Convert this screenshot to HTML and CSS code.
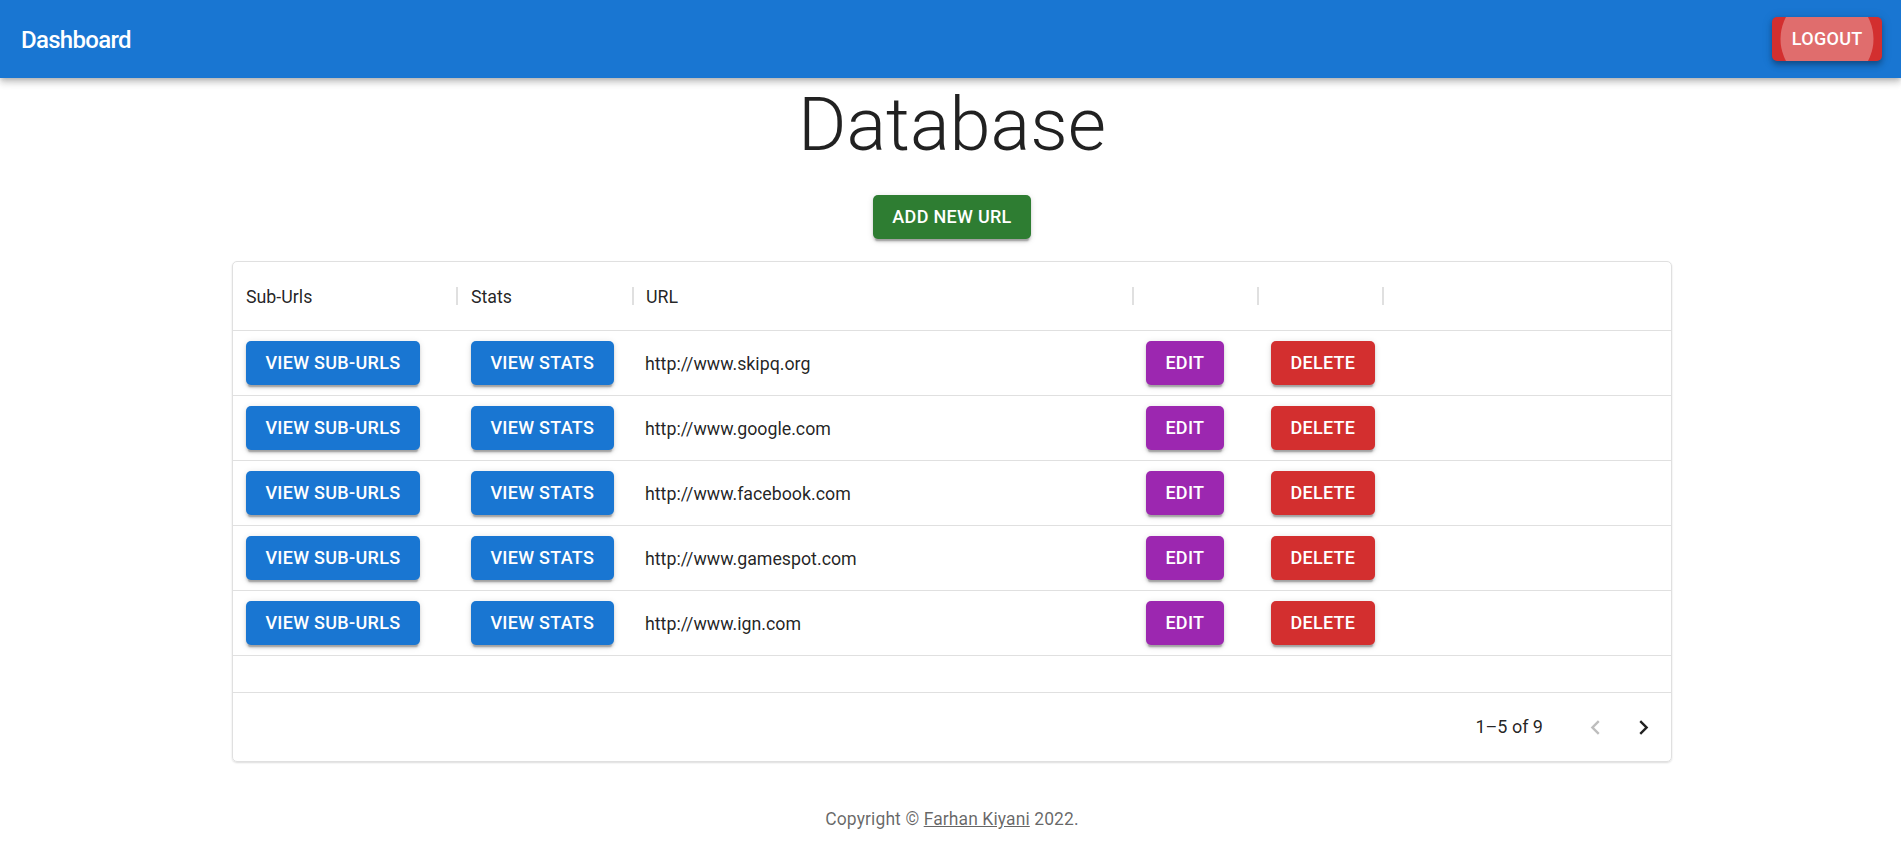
FILE: index.html
```html
<!DOCTYPE html>
<html lang="en">
<head>
<meta charset="utf-8">
<title>Dashboard</title>
<link rel="stylesheet" href="styles.css">
</head>
<body>
<header class="appbar">
  <div class="toolbar">
    <h6 class="brand">Dashboard</h6>
    <button class="btn btn-error btn-logout">Logout</button>
  </div>
</header>
<main class="main">
  <h2 class="title">Database</h2>
  <button class="btn btn-success btn-add">Add new URL</button>
  <div class="datagrid">
    <div class="grid-row grid-head">
      <div class="cell head-cell">Sub-Urls</div>
      <div class="cell head-cell">Stats</div>
      <div class="cell head-cell">URL</div>
      <div class="cell head-cell"></div>
      <div class="cell head-cell"></div>
      <div class="cell"></div>
    </div>
    <div class="grid-row">
      <div class="cell"><button class="btn btn-primary">View Sub-Urls</button></div>
      <div class="cell"><button class="btn btn-primary">View Stats</button></div>
      <div class="cell text-cell">http://www.skipq.org</div>
      <div class="cell"><button class="btn btn-secondary">Edit</button></div>
      <div class="cell"><button class="btn btn-error">Delete</button></div>
      <div class="cell"></div>
    </div>
    <div class="grid-row">
      <div class="cell"><button class="btn btn-primary">View Sub-Urls</button></div>
      <div class="cell"><button class="btn btn-primary">View Stats</button></div>
      <div class="cell text-cell">http://www.google.com</div>
      <div class="cell"><button class="btn btn-secondary">Edit</button></div>
      <div class="cell"><button class="btn btn-error">Delete</button></div>
      <div class="cell"></div>
    </div>
    <div class="grid-row">
      <div class="cell"><button class="btn btn-primary">View Sub-Urls</button></div>
      <div class="cell"><button class="btn btn-primary">View Stats</button></div>
      <div class="cell text-cell">http://www.facebook.com</div>
      <div class="cell"><button class="btn btn-secondary">Edit</button></div>
      <div class="cell"><button class="btn btn-error">Delete</button></div>
      <div class="cell"></div>
    </div>
    <div class="grid-row">
      <div class="cell"><button class="btn btn-primary">View Sub-Urls</button></div>
      <div class="cell"><button class="btn btn-primary">View Stats</button></div>
      <div class="cell text-cell">http://www.gamespot.com</div>
      <div class="cell"><button class="btn btn-secondary">Edit</button></div>
      <div class="cell"><button class="btn btn-error">Delete</button></div>
      <div class="cell"></div>
    </div>
    <div class="grid-row">
      <div class="cell"><button class="btn btn-primary">View Sub-Urls</button></div>
      <div class="cell"><button class="btn btn-primary">View Stats</button></div>
      <div class="cell text-cell">http://www.ign.com</div>
      <div class="cell"><button class="btn btn-secondary">Edit</button></div>
      <div class="cell"><button class="btn btn-error">Delete</button></div>
      <div class="cell"></div>
    </div>
    <div class="grid-filler"></div>
    <div class="grid-footer">
      <span class="page-info">1–5 of 9</span>
      <div class="page-actions">
        <button class="page-btn page-btn-disabled" aria-label="Previous page">
          <svg viewBox="0 0 24 24" width="29" height="29"><path d="M15.41 16.59 10.83 12l4.58-4.59L14 6l-6 6 6 6 1.41-1.41z" fill="currentColor"/></svg>
        </button>
        <button class="page-btn" aria-label="Next page">
          <svg viewBox="0 0 24 24" width="29" height="29"><path d="M8.59 16.59 13.17 12 8.59 7.41 10 6l6 6-6 6-1.41-1.41z" fill="currentColor"/></svg>
        </button>
      </div>
    </div>
  </div>
  <p class="copyright">Copyright © <a class="copyright-link" href="#">Farhan Kiyani</a> 2022.</p>
</main>
</body>
</html>
```
FILE: styles.css
```css
* { box-sizing: border-box; }

body {
  margin: 0;
  background: #fff;
  color: rgba(0, 0, 0, 0.87);
  font-family: Roboto, "Liberation Sans", Arial, sans-serif;
}

.appbar {
  position: relative;
  z-index: 1;
  background: #1976d2;
  color: #fff;
  box-shadow: 0 2.4px 4.8px -1.2px rgba(0,0,0,0.2), 0 4.8px 6px 0 rgba(0,0,0,0.14), 0 1.2px 12px 0 rgba(0,0,0,0.12);
}

.toolbar {
  height: 78px;
  display: flex;
  align-items: center;
  justify-content: space-between;
  padding: 0 19px 0 21px;
}

.brand {
  margin: 0;
  font-size: 24px;
  font-weight: 500;
  line-height: 1.6;
  letter-spacing: -0.7px;
  padding-top: 2px;
}

.btn {
  font-family: inherit;
  font-size: 18px;
  font-weight: 500;
  line-height: 29.7px;
  letter-spacing: 0.3px;
  text-transform: uppercase;
  color: #fff;
  border: 0;
  border-radius: 5px;
  padding: 7.3px 19.4px;
  min-width: 77.6px;
  cursor: pointer;
  box-shadow: 0 3.6px 1.2px -2.4px rgba(0,0,0,0.2), 0 2.4px 2.4px 0 rgba(0,0,0,0.14), 0 1.2px 6px 0 rgba(0,0,0,0.12);
}

.btn-primary { background: #1976d2; }
.btn-secondary { background: #9c27b0; }
.btn-error { background: #d32f2f; }
.btn-success { background: #2e7d32; }

.btn-logout {
  position: relative;
  overflow: hidden;
  box-shadow: 0 2.4px 4.8px -1.2px rgba(0,0,0,0.2), 0 4.8px 6px 0 rgba(0,0,0,0.14), 0 1.2px 12px 0 rgba(0,0,0,0.12);
}

.btn-logout::before {
  content: "";
  position: absolute;
  left: 50%;
  top: 50%;
  width: 93px;
  height: 93px;
  transform: translate(-50%, -50%);
  border-radius: 50%;
  background: rgba(255, 255, 255, 0.3);
}

.main {
  display: flex;
  flex-direction: column;
  align-items: center;
  padding-top: 3px;
  padding-left: 3px;
}

.title {
  margin: 0;
  font-size: 74px;
  font-weight: 300;
  line-height: 88px;
  letter-spacing: 0;
}

.btn-add {
  margin-top: 26px;
}

.datagrid {
  margin-top: 22px;
  width: 1440px;
  border: 1px solid #e0e0e0;
  border-radius: 5px;
  box-shadow: 0 1px 2px rgba(0,0,0,0.14);
  font-size: 17.8px;
  line-height: 1.43;
  letter-spacing: 0;
}

.grid-row {
  display: grid;
  grid-template-columns: 225px 175px 500px 125px 125px 1fr;
  align-items: center;
  height: 65px;
  border-bottom: 1px solid #e0e0e0;
}

.grid-head {
  height: 69px;
}

.cell {
  padding: 0 13px;
  white-space: nowrap;
}

.text-cell {
  padding-left: 12px;
}

.head-cell {
  position: relative;
  font-weight: 400;
  padding-left: 13px;
}

.head-cell::after {
  content: "";
  position: absolute;
  right: -1px;
  top: 50%;
  width: 2px;
  height: 18px;
  margin-top: -9px;
  background: #e0e0e0;
}

.head-cell:first-child::after { right: 0; }

.grid-filler {
  height: 36px;
}

.grid-footer {
  height: 69px;
  border-top: 1px solid #e0e0e0;
  display: flex;
  align-items: center;
  justify-content: flex-end;
  padding-right: 3px;
}

.page-info {
  margin-right: 28px;
  font-size: 18px;
}

.page-actions {
  display: flex;
}

.page-btn {
  width: 48.5px;
  height: 48.5px;
  display: flex;
  align-items: center;
  justify-content: center;
  padding: 0;
  border: 0;
  border-radius: 50%;
  background: transparent;
  color: rgba(0, 0, 0, 0.87);
  cursor: pointer;
}

.page-btn-disabled {
  color: rgba(0, 0, 0, 0.26);
}

.copyright {
  margin: 45px 0 0;
  text-align: center;
  font-size: 17.5px;
  line-height: 1.43;
  letter-spacing: 0.1px;
  color: rgba(0, 0, 0, 0.6);
}

.copyright-link {
  color: inherit;
  text-decoration: underline;
}
```
